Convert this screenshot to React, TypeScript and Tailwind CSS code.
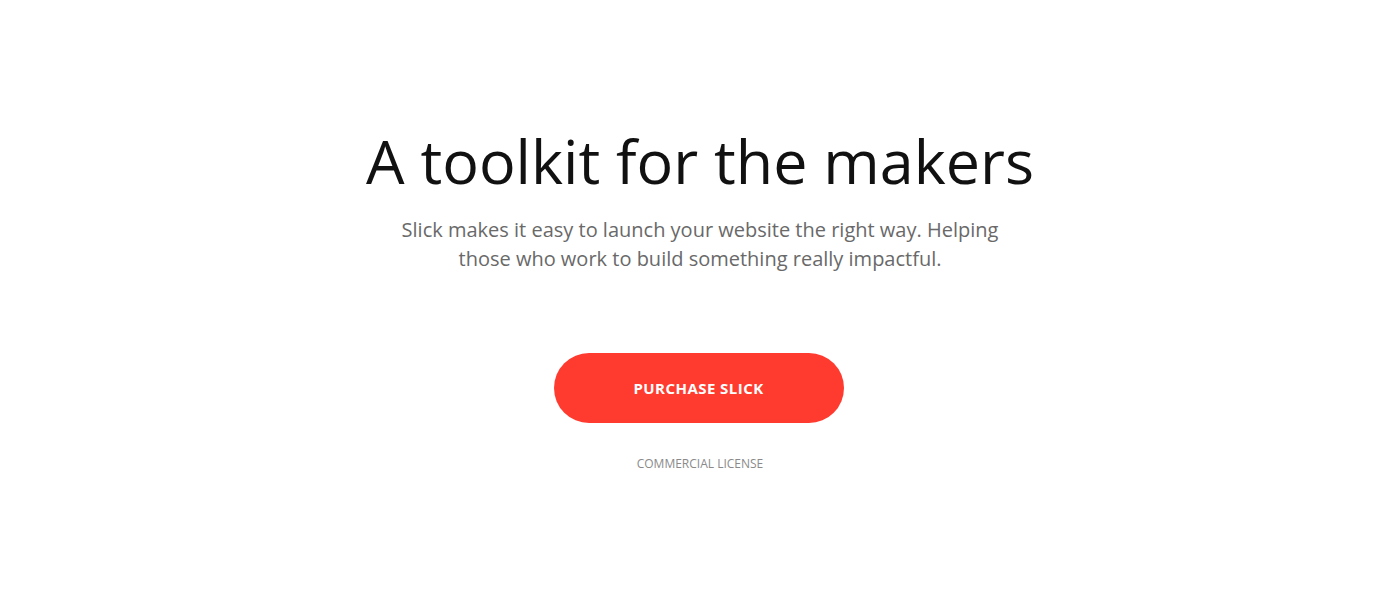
import React from "react";

export default function App() {
  return (
    <div className="w-full h-[606px] bg-white flex flex-col items-center" style={{ fontFamily: '"Open Sans", sans-serif' }}>
      <h1 className="mt-[119px] text-[61px] leading-[84px] font-normal text-[#111111]">
        A toolkit for the makers
      </h1>
      <p className="mt-[12px] text-[20px] leading-[29px] text-[#696969] text-center max-w-[620px]">
        Slick makes it easy to launch your website the right way. Helping those who work to build something really impactful.
      </p>
      <button className="mt-[80px] mr-[3px] w-[290px] h-[70px] rounded-full bg-[#ff3b30] text-white text-[15px] font-bold tracking-[0.03em]">
        PURCHASE SLICK
      </button>
      <div className="mt-[32px] text-[12px] tracking-[0] text-[#8a8a8a] uppercase">
        Commercial License
      </div>
    </div>
  );
}
